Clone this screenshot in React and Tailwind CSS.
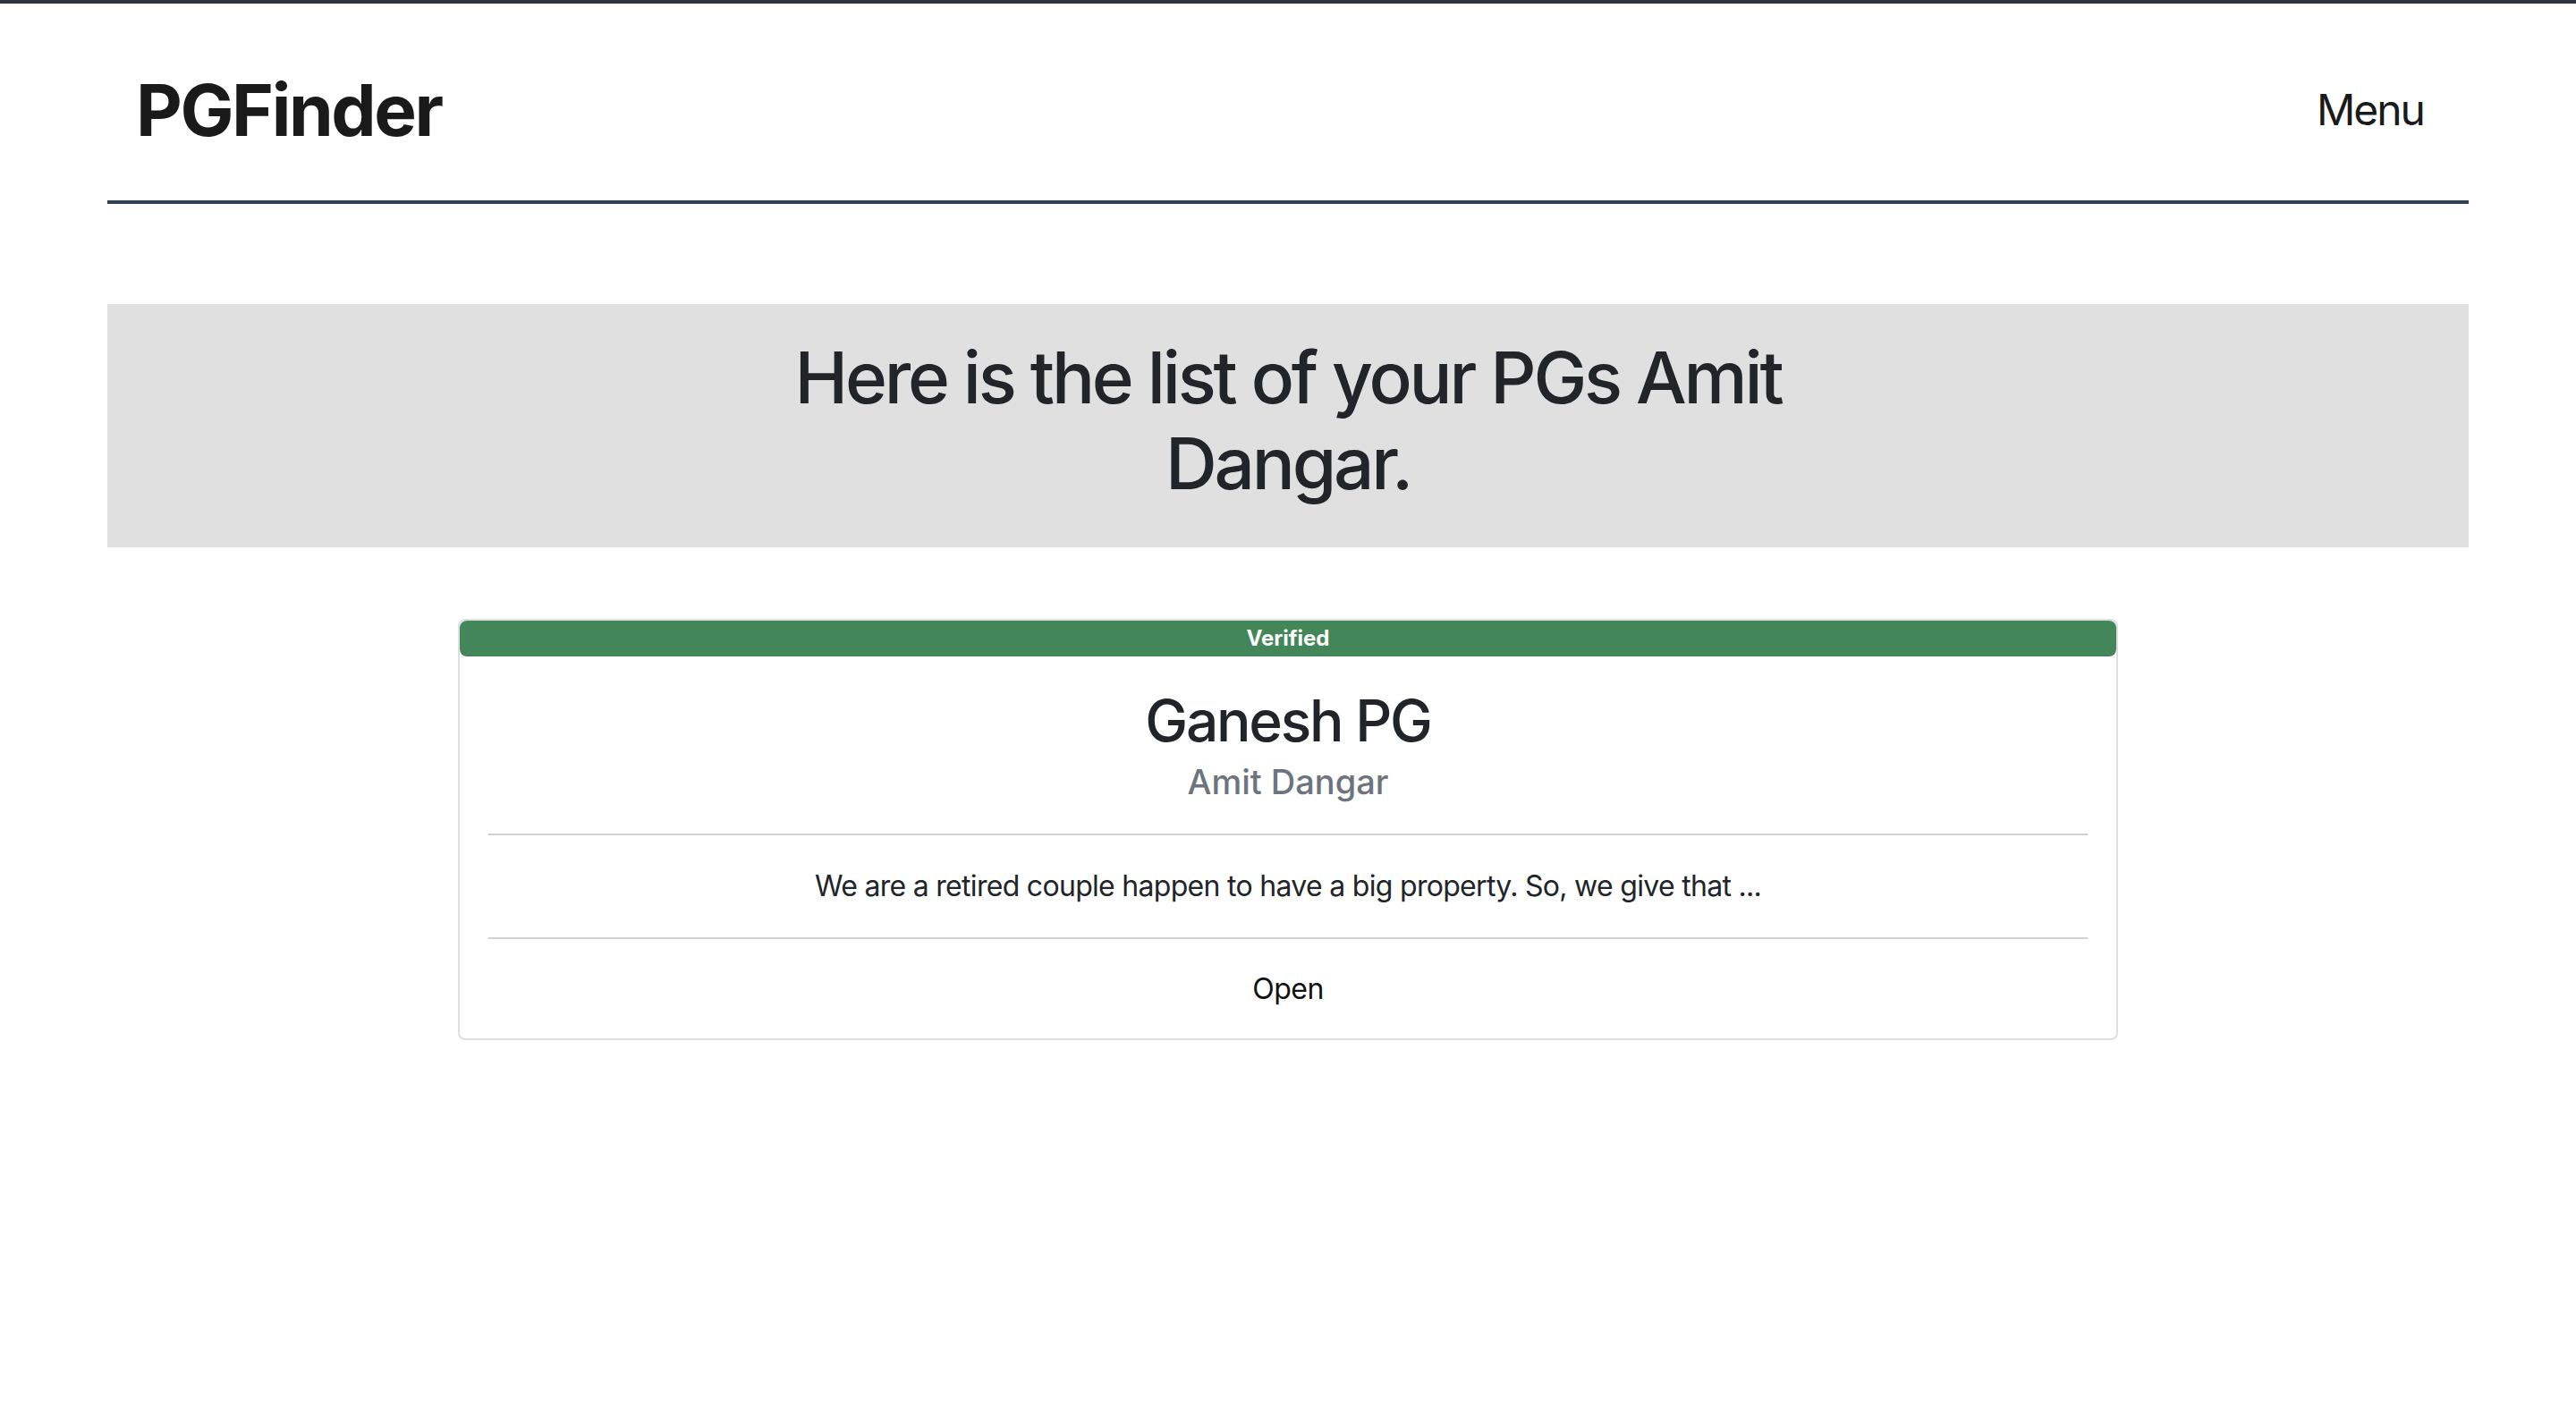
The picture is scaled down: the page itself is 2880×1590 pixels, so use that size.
export default function App() {
  return (
    <div className="min-h-[1590px] bg-white border-t-4 border-[#2e3442] font-['Inter','Liberation_Sans',sans-serif]">
      <div className="mx-[120px]">
        <header className="flex items-center justify-between pt-[71px] pb-[53px] pl-[32px] pr-[50px] border-b-4 border-[#334155]">
          <div className="text-[80px] leading-[96px] font-bold text-[#1a1a1a] tracking-[-2.4px]">PGFinder</div>
          <div className="text-[48px] leading-[58px] text-[#1a1a1a] tracking-[-2px]">Menu</div>
        </header>

        <section className="mt-[112px] bg-[#e0e0e0] pt-[34px] pb-[46px]">
          <h1 className="mx-auto max-w-[1240px] text-center text-[80px] leading-[96px] font-medium text-[#212529] tracking-[-3.2px]">
            Here is the list of your PGs Amit Dangar.
          </h1>
        </section>

        <div className="mt-[80px] mx-auto w-[1856px] rounded-[8px] border-2 border-[#dedede] bg-white">
          <div className="h-[40px] rounded-[8px] bg-[#42865a] text-center text-[24px] leading-[40px] font-bold text-white">
            Verified
          </div>
          <div className="px-[32px]">
            <div className="pt-[33px] pb-[35px] text-center">
              <h2 className="text-[64px] leading-[77px] font-medium text-[#212529] tracking-[-2.2px]">Ganesh PG</h2>
              <h3 className="mt-[8px] text-[38px] leading-[45px] font-medium text-[#6c757d] tracking-[0px]">Amit Dangar</h3>
            </div>
            <div className="h-[2px] bg-[#d0d0d0]"></div>
            <p className="py-[33px] text-center text-[32px] leading-[48px] text-[#212529] tracking-[-0.7px]">
              We are a retired couple happen to have a big property. So, we give that ...
            </p>
            <div className="h-[2px] bg-[#d0d0d0]"></div>
            <div className="pt-[32px] pb-[31px] text-center text-[32px] leading-[48px] text-[#111111] tracking-[-0.5px]">Open</div>
          </div>
        </div>
      </div>
    </div>
  );
}
